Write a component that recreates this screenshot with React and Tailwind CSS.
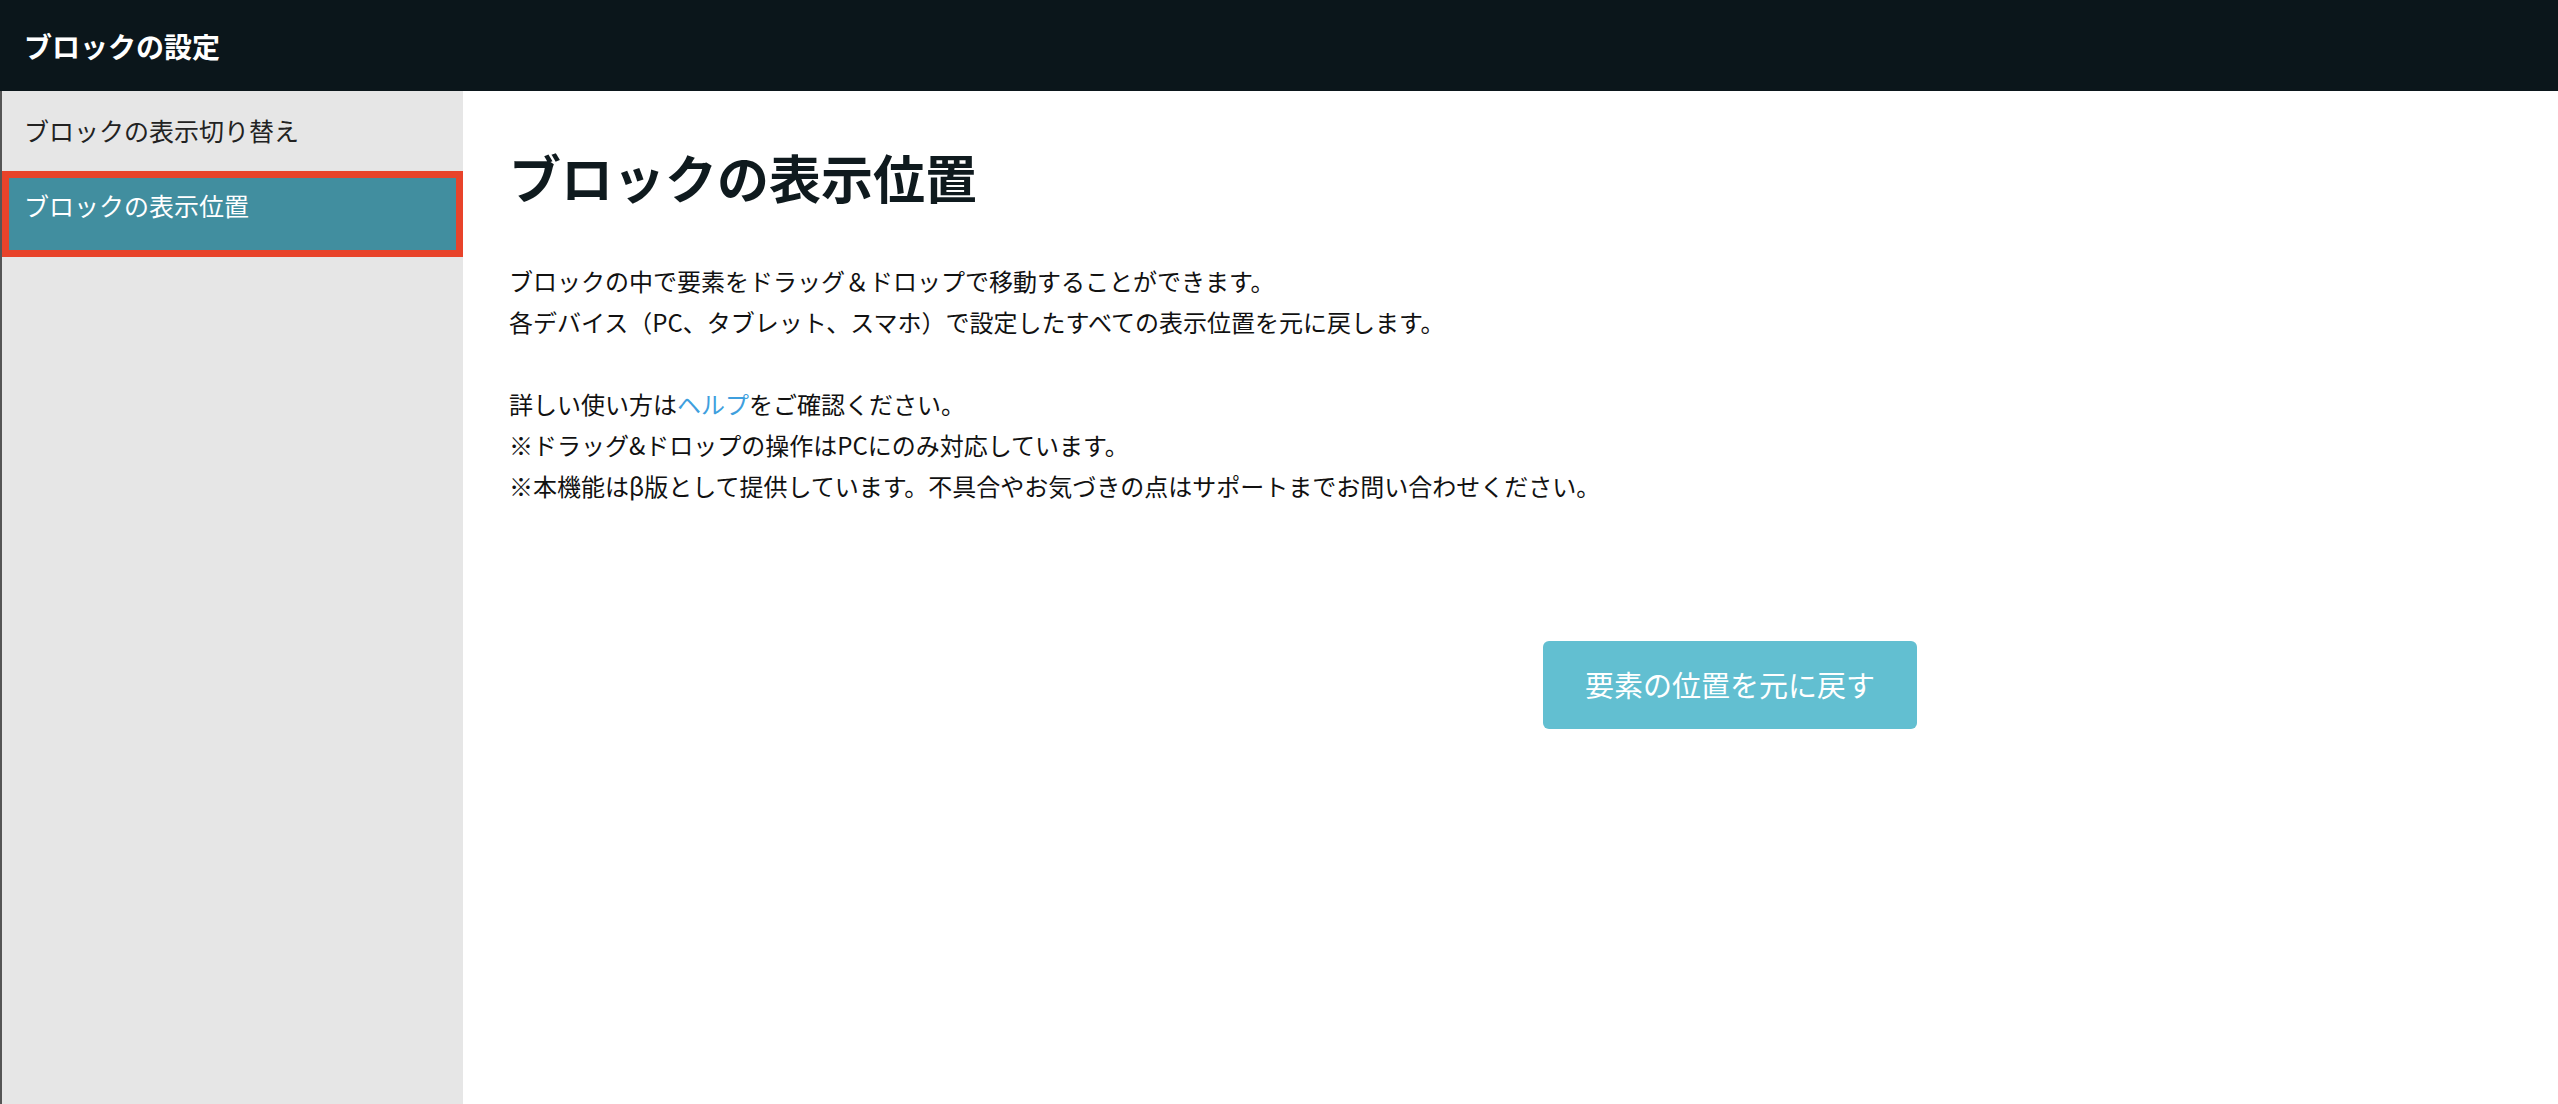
export default function App() {
  const font = { fontFamily: '"Noto Sans CJK JP", "Noto Sans", sans-serif' };
  return (
    <div className="w-[2558px] h-[1104px] flex flex-col bg-white text-[#111]" style={font}>
      <header className="h-[91px] shrink-0 bg-[#0b161b] flex items-center px-6">
        <h1 className="text-white text-[28px] font-bold">ブロックの設定</h1>
      </header>
      <div className="flex flex-1">
        <aside className="w-[463px] shrink-0 bg-[#e6e6e6] border-l-2 border-[#555]">
          <div className="h-[80px] flex items-center px-[22px] text-[25px] text-[#222]">ブロックの表示切り替え</div>
          <div className="h-[86px] bg-[#418e9f] border-[7px] border-[#e8432a] flex items-center px-[15px] text-[25px] text-white pb-4">
            ブロックの表示位置
          </div>
        </aside>
        <main className="flex-1 pl-[46px] pt-[60px]">
          <h2 className="text-[52px] font-bold text-[#0f1a1e] leading-none">ブロックの表示位置</h2>
          <div className="mt-[57px] text-[24px] leading-[41px] text-[#111]">
            <p>ブロックの中で要素をドラッグ＆ドロップで移動することができます。</p>
            <p>各デバイス（PC、タブレット、スマホ）で設定したすべての表示位置を元に戻します。</p>
            <p className="mt-[41px]">詳しい使い方は<span className="text-[#3f9fde]">ヘルプ</span>をご確認ください。</p>
            <p>※ドラッグ&amp;ドロップの操作はPCにのみ対応しています。</p>
            <p>※本機能はβ版として提供しています。不具合やお気づきの点はサポートまでお問い合わせください。</p>
          </div>
          <div className="mt-[135px] pl-[1034px]">
            <button className="w-[374px] h-[88px] rounded-md bg-[#62bfd1] text-white text-[29px]">要素の位置を元に戻す</button>
          </div>
        </main>
      </div>
    </div>
  );
}
